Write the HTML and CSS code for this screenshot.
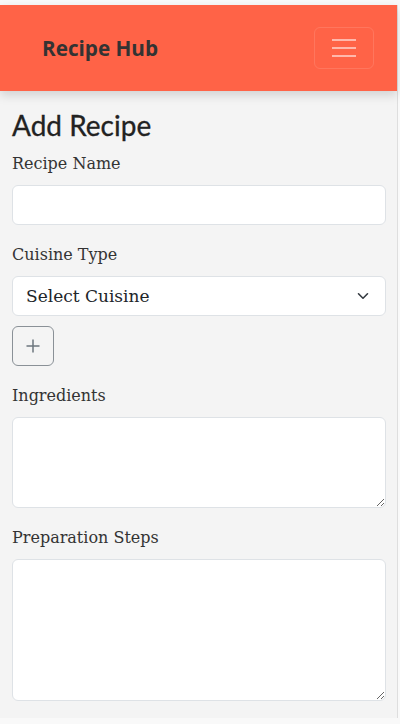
FILE: index.html
```html
<!DOCTYPE html>
<html lang="en">
<head>
<meta charset="utf-8">
<title>Recipe Hub</title>
<link rel="stylesheet" href="styles.css">
</head>
<body>
<div class="app">
  <nav class="navbar">
    <span class="brand">Recipe Hub</span>
    <button class="toggler" type="button" aria-label="Toggle navigation">
      <svg width="26" height="20" viewBox="0 0 26 20"><path d="M1 2h24M1 10h24M1 18h24" stroke="rgba(255,255,255,0.55)" stroke-width="2" fill="none"/></svg>
    </button>
  </nav>
  <main class="content">
    <h1 class="title">Add Recipe</h1>
    <form class="form">
      <div class="group">
        <label class="label">Recipe Name</label>
        <input class="control" type="text">
      </div>
      <div class="group">
        <label class="label">Cuisine Type</label>
        <div class="select">
          <span>Select Cuisine</span>
          <svg width="12" height="8" viewBox="0 0 12 8"><path d="M1.5 1.8 6 6.2 10.5 1.8" stroke="#343a40" stroke-width="1.6" fill="none" stroke-linecap="round" stroke-linejoin="round"/></svg>
        </div>
        <button class="add" type="button" aria-label="Add">
          <svg width="16" height="16" viewBox="0 0 16 16"><path d="M8 1.5v13M1.5 8h13" stroke="#6c757d" stroke-width="1.5" fill="none"/></svg>
        </button>
      </div>
      <div class="group">
        <label class="label">Ingredients</label>
        <textarea class="control area-sm"></textarea>
      </div>
      <div class="group">
        <label class="label">Preparation Steps</label>
        <textarea class="control area-lg"></textarea>
      </div>
    </form>
  </main>
</div>
</body>
</html>
```
FILE: styles.css
```css
* { box-sizing: border-box; }
html, body { margin: 0; padding: 0; }
body {
  background: #f9f9f9;
  font-family: "DejaVu Serif", serif;
  color: #333;
  padding-top: 5px;
}
.app {
  width: 398px;
  background: #f4f4f4;
  border-right: 1px solid #dedede;
}
.navbar {
  height: 86px;
  background: #ff6347;
  display: flex;
  align-items: center;
  justify-content: space-between;
  padding: 0 23px 0 42px;
  box-shadow: 0 4px 10px rgba(0,0,0,0.15);
  position: relative;
}
.brand {
  font-family: "Open Sans", sans-serif;
  font-weight: 700;
  font-size: 20.7px;
  color: #333;
}
.toggler {
  width: 60px;
  height: 42px;
  border: 1px solid rgba(255,255,255,0.12);
  border-radius: 6px;
  background: transparent;
  display: flex;
  align-items: center;
  justify-content: center;
  padding: 0;
}
.content {
  padding: 18px 11px 1px 12px;
}
.title {
  font-family: Lato, sans-serif;
  font-weight: 400;
  font-size: 28px;
  line-height: 33px;
  margin: 0 0 8px;
  color: #222;
  -webkit-text-stroke: 0.3px #222;
}
.form { display: flex; flex-direction: column; }
.group { margin-bottom: 16px; display: flex; flex-direction: column; }
.label {
  font-size: 16px;
  line-height: 27px;
  margin-bottom: 8px;
  color: #333;
}
.control {
  width: 100%;
  height: 40px;
  background: #fff;
  border: 1px solid #dee2e6;
  border-radius: 6px;
  font: inherit;
  padding: 6px 12px;
}
.area-sm { height: 91px; resize: vertical; }
.area-lg { height: 142px; resize: vertical; }
.select {
  height: 40px;
  background: #fff;
  border: 1px solid #dee2e6;
  border-radius: 6px;
  display: flex;
  align-items: center;
  justify-content: space-between;
  padding: 0 16px 0 13px;
  font-size: 17px;
  color: #212529;
}
.add {
  margin-top: 10px;
  width: 42px;
  height: 40px;
  border: 1px solid #8a9197;
  border-radius: 6px;
  background: transparent;
  display: flex;
  align-items: center;
  justify-content: center;
  padding: 0;
}
```
